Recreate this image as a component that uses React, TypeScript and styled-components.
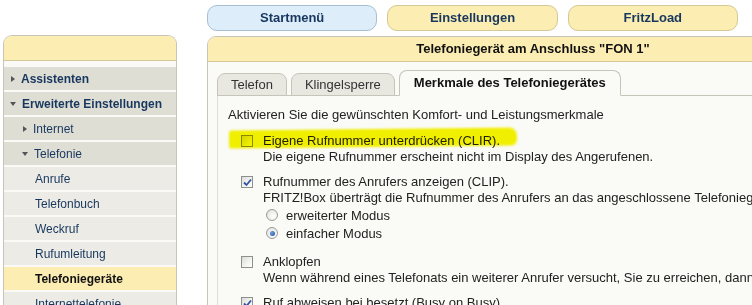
import React from 'react';
import styled, { createGlobalStyle } from 'styled-components';

const GlobalStyle = createGlobalStyle`
  html, body {
    margin: 0;
    padding: 0;
    background: #ffffff;
    overflow: hidden;
  }
  body {
    font-family: "Liberation Sans", Arial, sans-serif;
  }
`;

const colors = {
  navText: '#17375e',
  yellow: '#fcedb2',
  yellowBorder: '#d4c895',
  blue: '#ddedfa',
  blueBorder: '#a8bfd2',
  border: '#c7c5ba',
  rowDark: '#dfded5',
  rowLight: '#ecebe5',
  body: '#fafaf7',
};

type Level = 1 | 2 | 3;

interface MenuEntry {
  label: string;
  level: Level;
  arrow?: 'right' | 'down';
  active?: boolean;
}

const menu: MenuEntry[] = [
  { label: 'Assistenten', level: 1, arrow: 'right' },
  { label: 'Erweiterte Einstellungen', level: 1, arrow: 'down' },
  { label: 'Internet', level: 2, arrow: 'right' },
  { label: 'Telefonie', level: 2, arrow: 'down' },
  { label: 'Anrufe', level: 3 },
  { label: 'Telefonbuch', level: 3 },
  { label: 'Weckruf', level: 3 },
  { label: 'Rufumleitung', level: 3 },
  { label: 'Telefoniegeräte', level: 3, active: true },
  { label: 'Internettelefonie', level: 3 },
];

export default function App() {
  return (
    <>
      <GlobalStyle />
      <Page>
        <Sidebar>
          <SidebarHead />
          <MenuList>
            {menu.map((m) => (
              <MenuRow key={m.label} $level={m.level} $active={m.active}>
                {m.arrow && <Arrow $dir={m.arrow} />}
                {m.label}
              </MenuRow>
            ))}
          </MenuList>
        </Sidebar>

        <Main>
          <Nav>
            <NavButton $blue>Startmenü</NavButton>
            <NavButton>Einstellungen</NavButton>
            <NavButton>FritzLoad</NavButton>
          </Nav>

          <Panel>
            <PanelHead>Telefoniegerät am Anschluss "FON 1"</PanelHead>
            <PanelBody>
              <TabBar>
                <Tab>Telefon</Tab>
                <Tab>Klingelsperre</Tab>
                <Tab $active>Merkmale des Telefoniegerätes</Tab>
              </TabBar>
              <TabContent>
                <Intro>Aktivieren Sie die gewünschten Komfort- und Leistungsmerkmale</Intro>

                <Item $highlight>
                  <Check />
                  <ItemText>
                    <Line>Eigene Rufnummer unterdrücken (CLIR).</Line>
                    <Line>Die eigene Rufnummer erscheint nicht im Display des Angerufenen.</Line>
                  </ItemText>
                </Item>

                <Item>
                  <Check checked />
                  <ItemText>
                    <Line>Rufnummer des Anrufers anzeigen (CLIP).</Line>
                    <Line>
                      FRITZ!Box überträgt die Rufnummer des Anrufers an das angeschlossene
                      Telefoniegerät.
                    </Line>
                    <RadioGroup>
                      <RadioRow>
                        <Radio />
                        erweiterter Modus
                      </RadioRow>
                      <RadioRow>
                        <Radio checked />
                        einfacher Modus
                      </RadioRow>
                    </RadioGroup>
                  </ItemText>
                </Item>

                <Item>
                  <Check />
                  <ItemText>
                    <Line>Anklopfen</Line>
                    <Line>
                      Wenn während eines Telefonats ein weiterer Anrufer versucht, Sie zu erreichen,
                      dann hören Sie einen Anklopfton.
                    </Line>
                  </ItemText>
                </Item>

                <Item>
                  <Check checked />
                  <ItemText>
                    <Line>Ruf abweisen bei besetzt (Busy on Busy).</Line>
                  </ItemText>
                </Item>
              </TabContent>
            </PanelBody>
          </Panel>
        </Main>
      </Page>
    </>
  );
}

const Check = ({ checked }: { checked?: boolean }) => (
  <CheckBox>
    {checked && (
      <svg width="9" height="9" viewBox="0 0 9 9">
        <path d="M1 4.5 L3.5 7 L8 1.5" fill="none" stroke="#2f55a4" strokeWidth="1.8" />
      </svg>
    )}
  </CheckBox>
);

const Radio = ({ checked }: { checked?: boolean }) => (
  <RadioCircle>{checked && <RadioDot />}</RadioCircle>
);

const Page = styled.div`
  display: flex;
  align-items: flex-start;
  gap: 30px;
  padding: 5px 0 0 3px;
  width: 900px;
`;

const Sidebar = styled.div`
  flex: 0 0 172px;
  margin-top: 30px;
  border: 1px solid ${colors.border};
  border-bottom: none;
  border-radius: 9px 9px 0 0;
  background: #f6f5f0;
  overflow: hidden;
`;

const SidebarHead = styled.div`
  height: 24px;
  background: ${colors.yellow};
  border-bottom: 1px solid ${colors.yellowBorder};
`;

const MenuList = styled.div`
  display: flex;
  flex-direction: column;
  gap: 2px;
  padding-top: 6px;
  background: #fbfaf6;
`;

const MenuRow = styled.div<{ $level: Level; $active?: boolean }>`
  display: flex;
  align-items: center;
  height: 23px;
  padding-left: ${(p) => (p.$level === 1 ? 4 : p.$level === 2 ? 16 : 31)}px;
  background: ${(p) => (p.$active ? colors.yellow : p.$level === 3 ? colors.rowLight : colors.rowDark)};
  color: ${(p) => (p.$active ? '#111' : colors.navText)};
  font-size: 12px;
  font-weight: ${(p) => (p.$level === 1 || p.$active ? 'bold' : 'normal')};
  white-space: nowrap;
`;

const Arrow = styled.span<{ $dir: 'right' | 'down' }>`
  width: 0;
  height: 0;
  margin-right: 6px;
  margin-left: 3px;
  ${(p) =>
    p.$dir === 'right'
      ? `border-top: 3px solid transparent; border-bottom: 3px solid transparent; border-left: 4px solid #555;`
      : `border-left: 3px solid transparent; border-right: 3px solid transparent; border-top: 4px solid #555; margin-left: 2px;`}
`;

const Main = styled.div`
  display: flex;
  flex-direction: column;
  gap: 5px;
`;

const Nav = styled.div`
  display: flex;
  gap: 10px;
  width: 531px;
`;

const NavButton = styled.div<{ $blue?: boolean }>`
  flex: 1;
  height: 24px;
  line-height: 24px;
  text-align: center;
  border: 1px solid ${(p) => (p.$blue ? colors.blueBorder : colors.yellowBorder)};
  border-radius: 10px;
  background: ${(p) => (p.$blue ? colors.blue : colors.yellow)};
  color: ${colors.navText};
  font-size: 13px;
  font-weight: bold;
`;

const Panel = styled.div`
  width: 650px;
  border: 1px solid ${colors.border};
  border-radius: 9px 9px 0 0;
  overflow: hidden;
  background: ${colors.body};
`;

const PanelHead = styled.div`
  height: 24px;
  line-height: 24px;
  text-align: center;
  background: ${colors.yellow};
  border-bottom: 1px solid ${colors.yellowBorder};
  color: #111;
  font-size: 13px;
  font-weight: bold;
`;

const PanelBody = styled.div`
  padding: 9px 0 0 9px;
`;

const TabBar = styled.div`
  display: flex;
  align-items: flex-end;
  gap: 4px;
  height: 24px;
  border-bottom: 1px solid ${colors.border};
`;

const Tab = styled.div<{ $active?: boolean }>`
  position: relative;
  top: 1px;
  height: ${(p) => (p.$active ? 24 : 21)}px;
  line-height: ${(p) => (p.$active ? 24 : 21)}px;
  padding: 0 ${(p) => (p.$active ? 14 : 13)}px;
  border: 1px solid ${colors.border};
  border-bottom: ${(p) => (p.$active ? `1px solid ${colors.body}` : `1px solid ${colors.border}`)};
  border-radius: 8px 8px 0 0;
  background: ${(p) => (p.$active ? colors.body : '#e8e7e0')};
  color: ${(p) => (p.$active ? '#111' : '#333')};
  font-size: 13px;
  font-weight: ${(p) => (p.$active ? 'bold' : 'normal')};
`;

const TabContent = styled.div`
  border-left: 1px solid #dedcd3;
  padding: 11px 0 0 10px;
  font-size: 13px;
  color: #222;
`;

const Intro = styled.div`
  line-height: 16px;
  margin-bottom: 10px;
`;

const Item = styled.div<{ $highlight?: boolean }>`
  position: relative;
  display: flex;
  gap: 10px;
  padding-left: 13px;
  margin-bottom: 9px;
  ${(p) =>
    p.$highlight &&
    `&::after {
      content: '';
      position: absolute;
      left: 1px;
      top: -4px;
      width: 288px;
      height: 18px;
      background: #f6f400;
      border-radius: 3px 8px 6px 2px;
      filter: blur(1.2px);
      mix-blend-mode: multiply;
      transform: rotate(-0.6deg);
    }`}
`;

const ItemText = styled.div`
  display: flex;
  flex-direction: column;
  white-space: nowrap;
`;

const Line = styled.div`
  line-height: 16px;
`;

const CheckBox = styled.span`
  flex: 0 0 auto;
  display: flex;
  align-items: center;
  justify-content: center;
  box-sizing: border-box;
  width: 12px;
  height: 12px;
  margin-top: 2px;
  border: 1px solid #8e8f8f;
  background: linear-gradient(135deg, #dcdcd7 0%, #f4f4f1 60%, #ffffff 100%);
`;

const RadioGroup = styled.div`
  display: flex;
  flex-direction: column;
  margin: 0 0 3px 3px;
`;

const RadioRow = styled.div`
  display: flex;
  align-items: center;
  gap: 8px;
  height: 18px;
`;

const RadioCircle = styled.span`
  display: flex;
  align-items: center;
  justify-content: center;
  box-sizing: border-box;
  width: 12px;
  height: 12px;
  border: 1px solid #9a9b9b;
  border-radius: 50%;
  background: radial-gradient(circle at 65% 65%, #ffffff 0%, #e4e4df 80%);
`;

const RadioDot = styled.span`
  width: 5px;
  height: 5px;
  border-radius: 50%;
  background: radial-gradient(circle at 35% 35%, #6f9fe0, #1e4f9c);
`;
